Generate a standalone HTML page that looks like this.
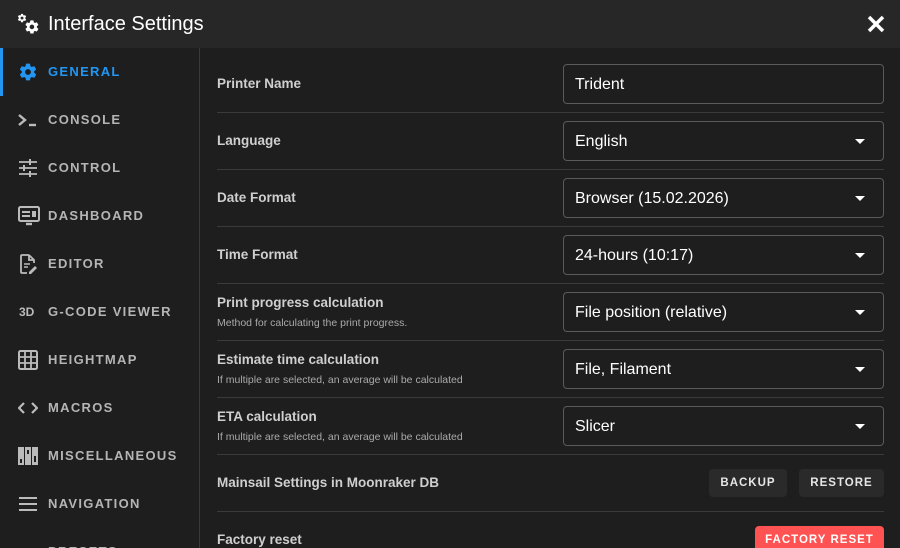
<!DOCTYPE html>
<html style="overflow:hidden;width:900px;height:548px"><head><style>
*{box-sizing:border-box;margin:0;padding:0}
body{width:900px;height:548px;overflow:hidden;background:#1e1e1e;font-family:"Liberation Sans",sans-serif;color:#fff;position:relative}
.hdr{position:absolute;left:0;top:0;width:900px;height:48px;background:#272727}
.hdr .t{position:absolute;left:48px;top:13px;font-size:20px;color:#fff}
.side{position:absolute;left:0;top:48px;width:200px;height:500px;border-right:1px solid #3a3a3a;overflow:hidden}
.nav{position:absolute;left:0;height:48px;width:200px}
.nav .l{position:absolute;left:48px;top:16px;font-size:13px;font-weight:bold;letter-spacing:1.3px;color:#b5b5b5}
.nav svg{position:absolute;left:18px;top:14px}
.act .l{color:#2196f3}
.act:before{content:"";position:absolute;left:0;top:0;width:3px;height:48px;background:#2196f3}
.row{position:absolute;left:217px;width:667px;border-bottom:1px solid #3a3a3a;height:57px}
.lab{position:absolute;left:0;font-size:13.5px;font-weight:bold;color:#cfcfcf}
.sub{position:absolute;left:0;top:33px;font-size:10.5px;color:#aaa}
.inp{position:absolute;left:346px;top:8px;width:321px;height:40px;border:1px solid #5a5a5a;border-radius:4px;font-size:16px;padding:11px 11px;color:#fff}
.inp .ar{position:absolute;right:18px;top:17px;width:0;height:0;border-left:5px solid transparent;border-right:5px solid transparent;border-top:5px solid #fff}
.btn{position:absolute;height:28px;background:#2a2a2a;border-radius:4px;font-size:11.5px;font-weight:bold;letter-spacing:1px;color:#e6e6e6;text-align:center;line-height:28px}
</style></head><body>
<div class="hdr">
<svg style="position:absolute;left:17px;top:13px" width="24" height="22" viewBox="0 0 24 22">
<g transform="translate(0,0) scale(0.42)"><path fill="#fff" d="M12 15.5A3.5 3.5 0 1 1 12 8.5a3.5 3.5 0 0 1 0 7m7.43-2.53c.04-.32.07-.64.07-.97s-.03-.66-.07-1l2.11-1.63a.5.5 0 0 0 .12-.64l-2-3.46a.5.5 0 0 0-.61-.22l-2.49 1c-.52-.39-1.060-.73-1.69-.98l-.37-2.65A.5.5 0 0 0 14 2h-4a.5.5 0 0 0-.5.42l-.37 2.65c-.63.25-1.17.59-1.69.98l-2.49-1a.5.5 0 0 0-.61.22l-2 3.46a.5.5 0 0 0 .12.64L4.57 11c-.04.34-.07.67-.07 1s.03.65.07.97l-2.11 1.66a.5.5 0 0 0-.12.64l2 3.46c.12.22.39.3.61.22l2.49-1.01c.52.4 1.06.74 1.69.99l.37 2.65c.04.24.25.42.5.42h4c.25 0 .46-.18.5-.42l.37-2.65c.63-.26 1.17-.59 1.69-.99l2.49 1.01c.22.08.49 0 .61-.22l2-3.46a.5.5 0 0 0-.12-.64z"/></g>
<g transform="translate(7,6) scale(0.66)"><path fill="#fff" d="M12 15.5A3.5 3.5 0 1 1 12 8.5a3.5 3.5 0 0 1 0 7m7.43-2.530c.04-.32.07-.64.07-.97s-.03-.66-.07-1l2.11-1.63a.5.5 0 0 0 .12-.64l-2-3.46a.5.5 0 0 0-.61-.22l-2.49 1c-.52-.39-1.06-.73-1.69-.98l-.37-2.65A.5.5 0 0 0 14 2h-4a.5.5 0 0 0-.5.42l-.37 2.65c-.63.25-1.17.59-1.69.98l-2.49-1a.5.5 0 0 0-.61.22l-2 3.46a.5.5 0 0 0 .12.64L4.57 11c-.04.34-.07.67-.07 1s.03.65.07.97l-2.11 1.66a.5.5 0 0 0-.12.64l2 3.46c.12.22.39.3.61.22l2.49-1.01c.52.4 1.06.74 1.69.99l.37 2.65c.04.24.25.42.5.42h4c.25 0 .46-.18.5-.42l.37-2.65c.63-.26 1.17-.59 1.69-.99l2.49 1.01c.22.08.49 0 .61-.22l2-3.46a.5.5 0 0 0-.12-.64z"/></g>
</svg>
<div class="t">Interface Settings</div>
<svg style="position:absolute;left:867px;top:15px" width="18" height="18" viewBox="0 0 18 18"><path d="M2 2L16 16M16 2L2 16" stroke="#fff" stroke-width="3.5"/></svg>
</div>
<div class="side">
<div class="nav act" style="top:0"><svg width="20" height="20" viewBox="0 0 24 24"><path fill="#2196f3" d="M12 15.5A3.5 3.5 0 1 1 12 8.5a3.5 3.5 0 0 1 0 7m7.43-2.53c.04-.32.07-.64.07-.97s-.03-.66-.07-1l2.110-1.63a.5.5 0 0 0 .12-.64l-2-3.46a.5.5 0 0 0-.61-.22l-2.49 1c-.52-.39-1.06-.73-1.69-.98l-.37-2.65A.5.5 0 0 0 14 2h-4a.5.5 0 0 0-.5.42l-.37 2.65c-.63.25-1.17.59-1.69.98l-2.49-1a.5.5 0 0 0-.61.22l-2 3.46a.5.5 0 0 0 .12.64L4.57 11c-.04.34-.07.67-.07 1s.03.65.07.97l-2.11 1.66a.5.5 0 0 0-.12.64l2 3.46c.12.22.39.3.61.22l2.49-1.01c.52.4 1.06.74 1.69.99l.37 2.65c.04.24.25.42.5.42h4c.25 0 .46-.18.5-.42l.37-2.65c.63-.26 1.17-.59 1.69-.99l2.49 1.01c.22.08.49 0 .61-.22l2-3.46a.5.5 0 0 0-.12-.64z"/></svg><div class="l">GENERAL</div></div>
<div class="nav" style="top:48px"><svg width="20" height="20" viewBox="0 0 20 20"><path d="M1 5l6 5-6 5" stroke="#bbb" stroke-width="2.4" fill="none"/><path d="M11 15h7" stroke="#bbb" stroke-width="2.4"/></svg><div class="l">CONSOLE</div></div>
<div class="nav" style="top:96px"><svg width="20" height="20" viewBox="0 0 20 20"><g stroke="#bbb" stroke-width="1.8"><path d="M1 4h18M1 10h18M1 16h18"/><path d="M12 1v6M6 7v6M12 13v6" stroke-width="2"/></g></svg><div class="l">CONTROL</div></div>
<div class="nav" style="top:144px"><svg width="22" height="20" viewBox="0 0 22 20"><rect x="1" y="1" width="20" height="14" rx="1.5" fill="none" stroke="#bbb" stroke-width="2"/><path d="M4 5h8v2H4zM4 9h8v2H4zM14 5h4v6h-4z" fill="#bbb"/><path d="M8 18h6" stroke="#bbb" stroke-width="2.4"/></svg><div class="l">DASHBOARD</div></div>
<div class="nav" style="top:192px"><svg width="20" height="20" viewBox="0 0 20 20"><path d="M11 1H4a1 1 0 0 0-1 1v16a1 1 0 0 0 1 1h5M11 1l5 5v3M11 1v5h5" fill="none" stroke="#bbb" stroke-width="1.8"/><path d="M6 10h6M6 13h4" stroke="#bbb" stroke-width="1.6"/><path d="M11 18l6-6 2 2-6 6h-2z" fill="#bbb"/></svg><div class="l">EDITOR</div></div>
<div class="nav" style="top:240px"><div style="position:absolute;left:19px;top:17px;font-size:12px;font-weight:bold;color:#bbb">3D</div><div class="l">G-CODE VIEWER</div></div>
<div class="nav" style="top:288px"><svg width="20" height="20" viewBox="0 0 20 20"><rect x="1" y="1" width="18" height="18" rx="1.5" fill="none" stroke="#bbb" stroke-width="2"/><path d="M7 1v18M13 1v18M1 7h18M1 13h18" stroke="#bbb" stroke-width="1.8"/></svg><div class="l">HEIGHTMAP</div></div>
<div class="nav" style="top:336px"><svg width="20" height="20" viewBox="0 0 20 20"><path d="M6 5l-5 5 5 5M14 5l5 5-5 5" stroke="#bbb" stroke-width="2.2" fill="none"/></svg><div class="l">MACROS</div></div>
<div class="nav" style="top:384px"><svg width="20" height="20" viewBox="0 0 20 20"><path d="M0 1h6v18H0zM7 1h6v18H7zM14 1h6v18h-6z" fill="#bbb"/><path d="M2 13h2v4H2zM9 4h2v4H9zM16 10h2v6h-2z" fill="#1e1e1e"/></svg><div class="l">MISCELLANEOUS</div></div>
<div class="nav" style="top:432px"><svg width="20" height="20" viewBox="0 0 20 20"><path d="M1 4h18M1 10h18M1 16h18" stroke="#bbb" stroke-width="2"/></svg><div class="l">NAVIGATION</div></div>
<div class="nav" style="top:480px"><div class="l">PRESETS</div></div>
</div>
<div class="row" style="top:56px"><div class="lab" style="top:20px">Printer Name</div><div class="inp">Trident</div></div>
<div class="row" style="top:113px"><div class="lab" style="top:20px">Language</div><div class="inp">English<span class="ar"></span></div></div>
<div class="row" style="top:170px"><div class="lab" style="top:20px">Date Format</div><div class="inp">Browser (15.02.2026)<span class="ar"></span></div></div>
<div class="row" style="top:227px"><div class="lab" style="top:20px">Time Format</div><div class="inp">24-hours (10:17)<span class="ar"></span></div></div>
<div class="row" style="top:284px"><div class="lab" style="top:11px">Print progress calculation</div><div class="sub">Method for calculating the print progress.</div><div class="inp">File position (relative)<span class="ar"></span></div></div>
<div class="row" style="top:341px"><div class="lab" style="top:11px">Estimate time calculation</div><div class="sub">If multiple are selected, an average will be calculated</div><div class="inp">File, Filament<span class="ar"></span></div></div>
<div class="row" style="top:398px"><div class="lab" style="top:11px">ETA calculation</div><div class="sub">If multiple are selected, an average will be calculated</div><div class="inp">Slicer<span class="ar"></span></div></div>
<div class="row" style="top:455px"><div class="lab" style="top:20px">Mainsail Settings in Moonraker DB</div>
<div class="btn" style="left:492px;top:14px;width:78px">BACKUP</div>
<div class="btn" style="left:582px;top:14px;width:85px">RESTORE</div></div>
<div class="row" style="top:512px;border:none;height:36px;overflow:hidden"><div class="lab" style="top:20px">Factory reset</div>
<div class="btn" style="left:538px;top:14px;width:129px;background:#ff5252;color:#fff">FACTORY RESET</div></div>
</body></html>
